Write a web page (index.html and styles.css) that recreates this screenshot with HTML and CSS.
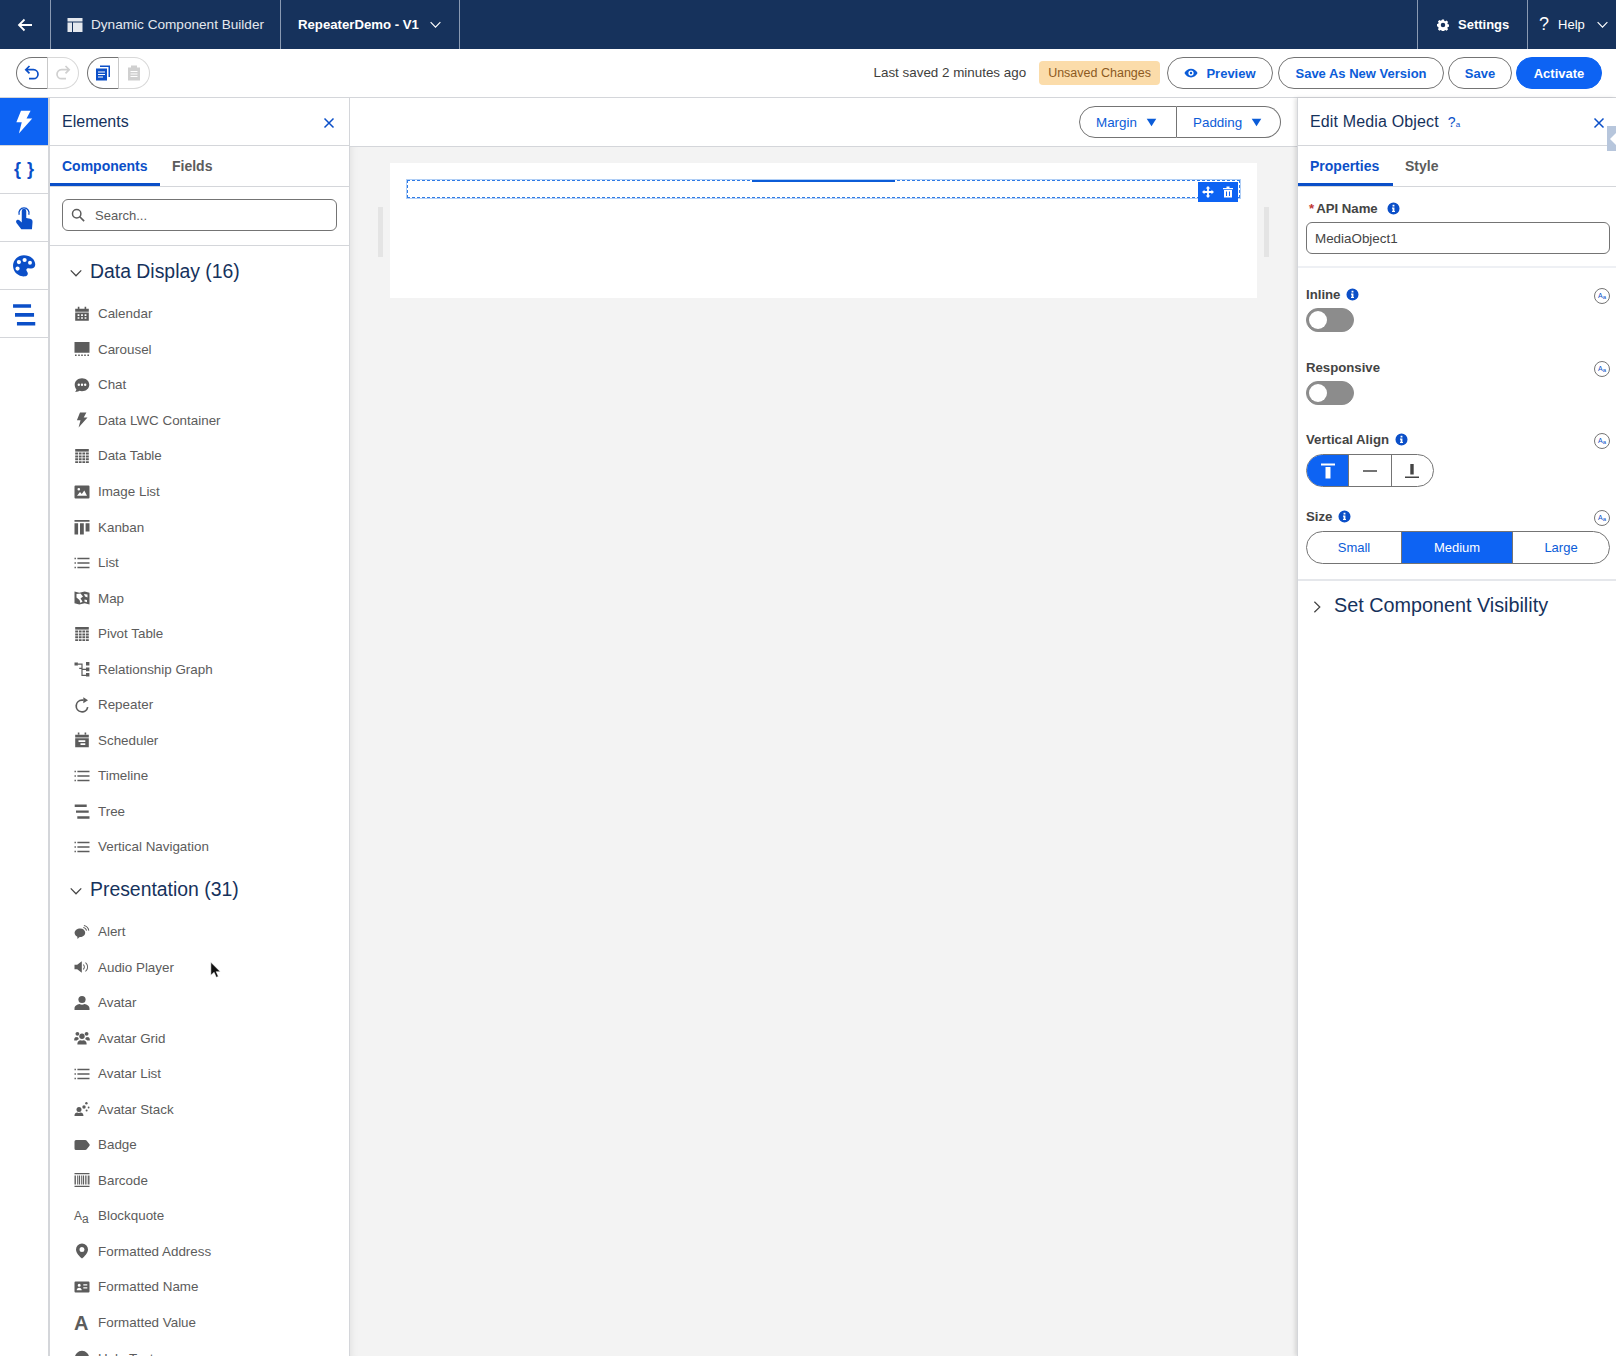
FILE: index.html
```html
<!DOCTYPE html>
<html lang="en">
<head>
    <meta charset="UTF-8">
    <title>Dynamic Component Builder</title>
    <link rel="stylesheet" href="styles.css">
</head>
<body>
    <!-- icon sprite -->
    <svg class="sprite" xmlns="http://www.w3.org/2000/svg">
        <symbol id="i-bolt" viewBox="0 0 16 16"><path d="M6 .5h6.4L9.7 5.600h3.800L4.600 15.600l1.900-7.400H2.900z"/></symbol>
        <symbol id="i-calendar" viewBox="0 0 16 16"><path d="M3.800.8h1.600v1.900H3.800zM10.600.8h1.600v1.900h-1.600zM1.200 2.800h13.600v2.900H1.200z"/><path fill-rule="evenodd" d="M1.200 6.500h13.600v8.300H1.200zM3.600 8.300v1.600h1.800V8.300zm3.500 0v1.600h1.800V8.300zm3.500 0v1.600h1.800V8.300zm-7 2.900v1.600h1.800v-1.600zm3.500 0v1.600h1.800v-1.600zm3.500 0v1.600h1.800v-1.600z"/></symbol>
        <symbol id="i-carousel" viewBox="0 0 16 16"><path d="M.5 1h15v10.800H.5zM1 13.400h1.600V15H1zM4.200 13.400h1.600V15H4.200zM7.200 13.400h1.600V15H7.200zM10.200 13.400h1.600V15h-1.600zM13.400 13.400H15V15h-1.600z"/></symbol>
        <symbol id="i-chat" viewBox="0 0 16 16"><path fill-rule="evenodd" d="M8 1.200c4.100 0 7.300 2.900 7.300 6.500s-3.200 6.500-7.300 6.500c-.9 0-1.800-.1-2.600-.4-1 .8-2.700 1.200-4.400 1 .8-.6 1.300-1.500 1.400-2.500C1.400 11.100.7 9.500.7 7.700.7 4.100 3.900 1.200 8 1.200zM4.800 6.500a1.200 1.200 0 100 2.400 1.200 1.200 0 000-2.400zm3.200 0a1.200 1.200 0 100 2.400 1.200 1.200 0 000-2.400zm3.200 0a1.200 1.200 0 100 2.400 1.200 1.200 0 000-2.400z"/></symbol>
        <symbol id="i-table" viewBox="0 0 16 16"><path d="M1.200 1h13.600v2.600H1.200z"/><path d="M1.200 4.500h3v2h-3zM5 4.500h2.600v2H5zM8.400 4.500H11v2H8.400zM11.800 4.500h3v2h-3zM1.200 7.400h3v2h-3zM5 7.400h2.600v2H5zM8.400 7.400H11v2H8.400zM11.800 7.400h3v2h-3zM1.200 10.300h3v2h-3zM5 10.300h2.600v2H5zM8.400 10.300H11v2H8.400zM11.800 10.300h3v2h-3zM1.200 13.200h3V15h-3zM5 13.200h2.600V15H5zM8.400 13.200H11V15H8.400zM11.800 13.200h3V15h-3z"/></symbol>
        <symbol id="i-image" viewBox="0 0 16 16"><path fill-rule="evenodd" d="M1.500 1.500h13a1 1 0 011 1v11a1 1 0 01-1 1h-13a1 1 0 01-1-1v-11a1 1 0 011-1zM3 11.800h10L10.300 6.500 7.800 10 6 8zM4.800 4a1.300 1.300 0 100 2.600 1.300 1.300 0 000-2.600z"/></symbol>
        <symbol id="i-kanban" viewBox="0 0 16 16"><path d="M.5 1h15v1.800H.5zM.5 4.200h3.600v11.300H.5zM6 4.200h3.800v11.300H6zM11.600 4.200h3.900v8.300h-3.900z"/></symbol>
        <symbol id="i-list" viewBox="0 0 16 16"><path d="M.5 2.800h1.400v1.400H.5zM.5 7.300h1.400v1.400H.5zM.5 11.800h1.400v1.400H.5zM3.400 2.800h12.100v1.400H3.400zM3.400 7.300h12.100v1.400H3.400zM3.400 11.800h12.100v1.400H3.400z"/></symbol>
        <symbol id="i-map" viewBox="0 0 16 16"><path fill-rule="evenodd" d="M.5 1.500l4.800 1.300 5.400-1.300 4.800 1.300v11.700l-4.800-1.300-5.400 1.300-4.800-1.300zM2.500 4v3.500L5.500 10l1 3 2-1.500-2-3 2.500-2-2.500-3zM10 4l1 2.500 2.500 1V4.500zM10.500 9.500v2l2.500.7V10z"/></symbol>
        <symbol id="i-graph" viewBox="0 0 16 16"><path d="M.5 1.500h3.400v3H.5zM12 1h3.400v3.600H12zM12 6.600h3.400v3.600H12zM12 12h3.400v3.600H12z"/><path d="M3.900 2.500h4.700v11.300H12v1.200H7.400V8H5.200V6.800h2.200V3.700H3.900zM8.600 7.800H12V9H8.600z"/></symbol>
        <symbol id="i-repeat" viewBox="0 0 16 16"><path d="M9.500 3.200H8a5.800 5.800 0 105.700 6.900" fill="none" stroke="#5c5c5c" stroke-width="1.700"/><path d="M9.300.3l4.700 3-4.700 3z"/></symbol>
        <symbol id="i-scheduler" viewBox="0 0 16 16"><path d="M3.800.6h1.600v1.900H3.800zM10.600.6h1.600v1.900h-1.600zM1.200 2.800h13.600v2.700H1.200z"/><path fill-rule="evenodd" d="M1.200 6.300h13.600v8.900H1.200zM4.500 8.200v1.700h6.800V8.200zm2 3.100v1.700h4.800v-1.700z"/></symbol>
        <symbol id="i-tree" viewBox="0 0 16 16"><path d="M.7 1.500h12v2.400H.7zM2 7.400h12.700v2.400H2zM3.300 13.300h12.200v2.400H3.300z"/></symbol>
        <symbol id="i-alert" viewBox="0 0 16 16"><path d="M6.200 4.500c3 0 5 2 5 4.300 0 2.400-2.400 4.300-5 4.300l-1 .1-1.600 1.800-.4-2.500C1.600 12 .6 10.500.6 8.800c0-2.300 2.500-4.300 5.600-4.300z"/><path d="M10 .9c2.900.5 5 2.700 5.300 5.700l-1 .1C14 4.200 12.300 2.300 9.800 1.900zM9.400 3c1.900.3 3.300 1.600 3.600 3.500l-1 .2c-.3-1.400-1.200-2.400-2.800-2.700z"/></symbol>
        <symbol id="i-audio" viewBox="0 0 16 16"><path d="M.5 5.800h2.700L7.800 2.200v11.600L3.200 10.200H.5z"/><path d="M9.500 5.300c.9.700 1.300 1.600 1.300 2.700s-.4 2-1.300 2.700l-.6-.8c.6-.5 1-1.100 1-1.900s-.4-1.400-1-1.900zM11.700 3.300c1.500 1.100 2.300 2.800 2.300 4.700s-.8 3.600-2.300 4.700l-.6-.8c1.200-.9 2-2.300 2-3.900s-.8-3-2-3.900z"/></symbol>
        <symbol id="i-avatar" viewBox="0 0 16 16"><circle cx="8" cy="4.500" r="3.600"/><path d="M.5 15v-1.400C.5 10.800 3 9.400 5.500 9c1.500.9 3.500.9 5 0 2.500.4 5 1.800 5 4.600V15z"/></symbol>
        <symbol id="i-group" viewBox="0 0 16 16"><circle cx="8" cy="6.200" r="2.700"/><path d="M3.400 14.500v-1c0-2 1.600-3 3.100-3.300 1 .5 2 .5 3 0 1.500.3 3.100 1.300 3.100 3.300v1z"/><circle cx="3.400" cy="3.800" r="1.900"/><circle cx="12.600" cy="3.800" r="1.900"/><path d="M.2 10.600V9.400c0-1.300 1-2.200 2-2.400.6.300 1.200.4 1.800.2.200.7.500 1.300 1 1.800-1 .4-1.700.9-2.200 1.600zM15.800 10.600V9.400c0-1.300-1-2.200-2-2.400-.6.300-1.200.4-1.800.2-.2.700-.5 1.300-1 1.800 1 .4 1.700.9 2.200 1.600z"/></symbol>
        <symbol id="i-stack" viewBox="0 0 16 16"><circle cx="5" cy="8.500" r="2.500"/><path d="M.5 15v-.8c0-1.600 1.300-2.400 2.700-2.700.9.500 2.300.5 3.300 0 1.600.3 2.900 1.100 2.900 2.700v.8z"/><circle cx="10" cy="6" r="1.700"/><circle cx="12.400" cy="2.200" r="1.200"/><circle cx="14.600" cy="6.500" r=".9"/><circle cx="12.600" cy="9.400" r="1"/></symbol>
        <symbol id="i-badge" viewBox="0 0 16 16"><path d="M2 3h9.300c.5 0 .9.200 1.200.5l3 3.800c.3.400.3 1 0 1.400l-3 3.800c-.3.300-.7.500-1.200.5H2a1.500 1.500 0 01-1.500-1.500v-7A1.500 1.500 0 012 3z"/></symbol>
        <symbol id="i-barcode" viewBox="0 0 16 16"><path d="M.5 1h15v1.300H.5zM.5 13.700h15V15H.5zM.5 3.500h1.400v9H.5zM3 3.500h.8v9H3zM4.700 3.500h1.400v9H4.700zM7 3.500h.8v9H7zM8.700 3.500h1.400v9H8.700zM11 3.500h.8v9H11zM12.500 3.500h.8v9h-.8zM14.100 3.500h1.400v9h-1.400z"/></symbol>
        <symbol id="i-pin" viewBox="0 0 16 16"><path fill-rule="evenodd" d="M8 .5a6 6 0 016 6c0 3.600-3.800 7.300-6 9-2.200-1.700-6-5.400-6-9a6 6 0 016-6zm0 3.600a2.500 2.500 0 100 5 2.500 2.500 0 000-5z"/></symbol>
        <symbol id="i-card" viewBox="0 0 16 16"><path fill-rule="evenodd" d="M1.500 2.500h13a1 1 0 011 1v9a1 1 0 01-1 1h-13a1 1 0 01-1-1v-9a1 1 0 011-1zM5.200 4.800a1.500 1.500 0 100 3 1.500 1.500 0 000-3zM2.700 11.200h5c0-1.600-1-2.500-2.500-2.500s-2.500.9-2.500 2.500zM9.300 5.300v1.300h4V5.300zm0 3v1.300h4V8.300z"/></symbol>
        <symbol id="i-help" viewBox="0 0 16 16"><circle cx="8" cy="8" r="7.200"/></symbol>
        <symbol id="i-info" viewBox="0 0 14 14"><path fill-rule="evenodd" d="M7 .5a6.500 6.500 0 110 13 6.500 6.500 0 010-13zM6 3v1.800h2V3zm-.6 3v1.200H6v2.400h-.6v1.200h3.200V9.600H8V6z"/></symbol>
        <symbol id="i-chev" viewBox="0 0 16 16"><path d="M2 5l6 6.200L14 5" fill="none" stroke="currentColor" stroke-width="1.400"/></symbol>
        <symbol id="i-caret" viewBox="0 0 12 12"><path d="M.8 2h10.400L6 10z"/></symbol>
        <symbol id="i-close" viewBox="0 0 12 12"><path d="M1.500 1.500l9 9M10.500 1.500l-9 9" fill="none" stroke="currentColor" stroke-width="1.500"/></symbol>
    </svg>

    <header class="topbar">
        <a class="topbar-item back">
            <svg class="icon-18" viewBox="0 0 18 18"><path d="M16 9H3M8.500 3.500L3 9l5.500 5.500" fill="none" stroke="currentColor" stroke-width="1.800"/></svg>
        </a>
        <div class="topbar-item app-name">
            <svg class="icon-16" viewBox="0 0 16 16"><path d="M.5 1h15v3.500H.5zM.5 5.500h4.500v9.500H.5zM6 5.500h9.500v9.500H6z" fill="currentColor"/></svg>
            <span>Dynamic Component Builder</span>
        </div>
        <div class="topbar-item version">
            <span>RepeaterDemo - V1</span>
            <svg class="icon-13"><use href="#i-chev"/></svg>
        </div>
        <div class="topbar-space"></div>
        <div class="topbar-item settings">
            <svg class="icon-12" viewBox="0 0 16 16"><path fill="currentColor" fill-rule="evenodd" d="M6.600.6h2.800l.4 1.900 1.300.6 1.700-1 2 2-1 1.700.6 1.300 1.900.4v2.800l-1.900.4-.6 1.300 1 1.700-2 2-1.700-1-1.300.6-.4 1.900H6.600l-.4-1.900-1.300-.6-1.700 1-2-2 1-1.700-.6-1.300L-.3 9.400V6.600l1.900-.4.600-1.300-1-1.700 2-2 1.700 1 1.300-.6zM8 5a3 3 0 100 6 3 3 0 000-6z"/></svg>
            <span>Settings</span>
        </div>
        <div class="topbar-item help">
            <span class="help-mark">?</span>
            <span>Help</span>
            <svg class="icon-13"><use href="#i-chev"/></svg>
        </div>
    </header>

    <div class="toolbar">
        <div class="btn-pair">
            <button class="pair-btn on">
                <svg class="icon-18" viewBox="0 0 18 18"><path d="M6.500 2L2.800 5.700l3.700 3.700M3 5.700h7.500a4.500 4.500 0 010 9H6" fill="none" stroke="currentColor" stroke-width="1.700"/></svg>
            </button>
            <button class="pair-btn off">
                <svg class="icon-18" viewBox="0 0 18 18"><path d="M11.500 2l3.700 3.700-3.700 3.700M15 5.700H7.500a4.500 4.500 0 000 9H12" fill="none" stroke="currentColor" stroke-width="1.700"/></svg>
            </button>
        </div>
        <div class="btn-pair">
            <button class="pair-btn on">
                <svg class="icon-16" viewBox="0 0 16 16"><path fill="currentColor" d="M5 .5h10v11.500h-1.500V2H5z"/><path fill="currentColor" fill-rule="evenodd" d="M1 3.500h11V15.500H1zM3 6.500v1h7v-1zm0 2.500v1h7V9zm0 2.500v1h5v-1z"/></svg>
            </button>
            <button class="pair-btn off">
                <svg class="icon-16" viewBox="0 0 16 16"><path fill="currentColor" fill-rule="evenodd" d="M5 .5h6v2h3v13H2v-13h3zM4.500 6v1h7V6zm0 2.500v1h7v-1zm0 2.500v1h7v-1z"/></svg>
            </button>
        </div>
        <div class="toolbar-space"></div>
        <span class="saved">Last saved 2 minutes ago</span>
        <span class="unsaved">Unsaved Changes</span>
        <button class="btn btn-preview">
            <svg class="icon-14" viewBox="0 0 16 16"><path fill="currentColor" fill-rule="evenodd" d="M8 3c3.300 0 6 2.100 7.500 5-1.500 2.900-4.200 5-7.500 5S2 10.900.5 8C2 5.100 4.700 3 8 3zm0 2a3 3 0 100 6 3 3 0 000-6zm0 1.600a1.400 1.400 0 110 2.800 1.400 1.400 0 010-2.800z"/></svg>
            Preview
        </button>
        <button class="btn btn-version">Save As New Version</button>
        <button class="btn btn-save">Save</button>
        <button class="btn btn-activate">Activate</button>
    </div>

    <div class="workspace">
        <nav class="rail">
            <div class="rail-item active"><svg class="icon-24"><use href="#i-bolt"/></svg></div>
            <div class="rail-item"><span class="braces">{ }</span></div>
            <div class="rail-item">
                <svg class="icon-24" viewBox="0 0 16 16"><path fill="currentColor" d="M6.500 6V3.300a1.500 1.500 0 013 0V8l2.600.5c1 .2 1.700 1.100 1.600 2.100L13.300 15.500H6.200L3 11.300c-.5-.7-.3-1.500.3-1.900.6-.4 1.300-.3 1.800.2l1.400 1.400z"/><path fill="none" stroke="currentColor" stroke-width=".9" d="M4.800 5.800a3.400 3.400 0 116.400 0"/></svg>
            </div>
            <div class="rail-item">
                <svg class="icon-24" viewBox="0 0 16 16"><path fill="currentColor" fill-rule="evenodd" d="M8 .8c4.200 0 7.500 2.800 7.500 6.200 0 1.800-1.500 3-3.300 2.700l-1.400-.2c-1-.1-1.600 1-1 1.800l.5.800c.7 1.200-.1 2.800-1.700 2.800A7.100 7.100 0 01.7 8 7.200 7.200 0 018 .8zM4.600 4a1.400 1.400 0 100 2.800 1.400 1.400 0 000-2.800zM8.400 2.600a1.400 1.400 0 100 2.800 1.400 1.400 0 000-2.800zM12 4.500a1.300 1.300 0 100 2.600 1.300 1.300 0 000-2.600zM3.700 8.300a1.400 1.400 0 100 2.800 1.400 1.400 0 000-2.800z"/></svg>
            </div>
            <div class="rail-item"><svg class="icon-24"><use href="#i-tree"/></svg></div>
        </nav>

        <aside class="elements">
            <div class="panel-head">
                <h2>Elements</h2>
                <svg class="panel-close"><use href="#i-close"/></svg>
            </div>
            <div class="tabs">
                <div class="tab active tab-components">Components</div>
                <div class="tab">Fields</div>
            </div>
            <div class="search-wrap">
                <div class="search">
                    <svg class="icon-14" viewBox="0 0 16 16"><circle cx="6.500" cy="6.500" r="4.800" fill="none" stroke="currentColor" stroke-width="1.700"/><path d="M10 10l5 5" stroke="currentColor" stroke-width="1.900"/></svg>
                    <span>Search...</span>
                </div>
            </div>
            <div class="element-list">
                <div class="group-title"><svg class="icon-14"><use href="#i-chev"/></svg>Data Display (16)</div>
                <ul>
                    <li><svg><use href="#i-calendar"/></svg>Calendar</li>
                    <li><svg><use href="#i-carousel"/></svg>Carousel</li>
                    <li><svg><use href="#i-chat"/></svg>Chat</li>
                    <li><svg><use href="#i-bolt"/></svg>Data LWC Container</li>
                    <li><svg><use href="#i-table"/></svg>Data Table</li>
                    <li><svg><use href="#i-image"/></svg>Image List</li>
                    <li><svg><use href="#i-kanban"/></svg>Kanban</li>
                    <li><svg><use href="#i-list"/></svg>List</li>
                    <li><svg><use href="#i-map"/></svg>Map</li>
                    <li><svg><use href="#i-table"/></svg>Pivot Table</li>
                    <li><svg><use href="#i-graph"/></svg>Relationship Graph</li>
                    <li><svg><use href="#i-repeat"/></svg>Repeater</li>
                    <li><svg><use href="#i-scheduler"/></svg>Scheduler</li>
                    <li><svg><use href="#i-list"/></svg>Timeline</li>
                    <li><svg><use href="#i-tree"/></svg>Tree</li>
                    <li><svg><use href="#i-list"/></svg>Vertical Navigation</li>
                </ul>
                <div class="group-title"><svg class="icon-14"><use href="#i-chev"/></svg>Presentation (31)</div>
                <ul>
                    <li><svg><use href="#i-alert"/></svg>Alert</li>
                    <li><svg><use href="#i-audio"/></svg>Audio Player</li>
                    <li><svg><use href="#i-avatar"/></svg>Avatar</li>
                    <li><svg><use href="#i-group"/></svg>Avatar Grid</li>
                    <li><svg><use href="#i-list"/></svg>Avatar List</li>
                    <li><svg><use href="#i-stack"/></svg>Avatar Stack</li>
                    <li><svg><use href="#i-badge"/></svg>Badge</li>
                    <li><svg><use href="#i-barcode"/></svg>Barcode</li>
                    <li><span class="glyph">A<small>a</small></span>Blockquote</li>
                    <li><svg><use href="#i-pin"/></svg>Formatted Address</li>
                    <li><svg><use href="#i-card"/></svg>Formatted Name</li>
                    <li><span class="glyph glyph-big">A</span>Formatted Value</li>
                    <li><svg><use href="#i-help"/></svg>Help Text</li>
                </ul>
            </div>
        </aside>

        <main class="stage">
            <div class="stage-head">
                <div class="spacing-btns">
                    <button>Margin<svg class="icon-11"><use href="#i-caret"/></svg></button>
                    <button>Padding<svg class="icon-11"><use href="#i-caret"/></svg></button>
                </div>
            </div>
            <div class="canvas">
                <div class="handle"></div>
                <div class="canvas-card">
                    <div class="selected">
                        <div class="selected-bar"></div>
                        <div class="selected-tools">
                            <svg class="icon-12" viewBox="0 0 12 12"><path fill="currentColor" d="M6 0l2.300 2.500H6.900v2.600h2.600V3.700L12 6 9.500 8.300V6.900H6.900v2.600h1.400L6 12 3.700 9.500h1.400V6.900H2.500v1.400L0 6l2.500-2.300v1.400h2.600V2.500H3.700z"/></svg>
                            <svg class="icon-12" viewBox="0 0 12 12"><path fill="currentColor" fill-rule="evenodd" d="M4.500.5h3V2H11v1.300H1V2h3.500zM2 4h8v7.500H2zM4 5.500v4.500h1V5.500zm3 0v4.500h1V5.500z"/></svg>
                        </div>
                    </div>
                </div>
                <div class="handle"></div>
            </div>
        </main>

        <aside class="props">
            <div class="panel-head props-head">
                <h2>Edit Media Object</h2>
                <span class="title-help">?<small>a</small></span>
                <svg class="panel-close"><use href="#i-close"/></svg>
                <div class="edge-tab"></div>
            </div>
            <div class="tabs props-tabs">
                <div class="tab active tab-properties">Properties</div>
                <div class="tab">Style</div>
            </div>

            <div class="prop-section api-section">
                <div class="field-label"><span class="req">*</span>API Name<svg class="info info-api"><use href="#i-info"/></svg></div>
                <div class="text-input">MediaObject1</div>
            </div>

            <div class="prop-section attrs">
                <div class="field field-inline">
                    <div class="field-row">
                        <div class="field-label">Inline<svg class="info"><use href="#i-info"/></svg></div>
                        <span class="dyn">A<small>a</small></span>
                    </div>
                    <div class="toggle"><span></span></div>
                </div>
                <div class="field field-inline field-short">
                    <div class="field-row">
                        <div class="field-label">Responsive</div>
                        <span class="dyn">A<small>a</small></span>
                    </div>
                    <div class="toggle"><span></span></div>
                </div>
                <div class="field field-align">
                    <div class="field-row">
                        <div class="field-label">Vertical Align<svg class="info"><use href="#i-info"/></svg></div>
                        <span class="dyn">A<small>a</small></span>
                    </div>
                    <div class="segments segments-align">
                        <div class="segment active">
                            <svg class="icon-18" viewBox="0 0 18 18"><path fill="currentColor" d="M2 1.500h14v2H2zM6.500 5h5v11.500h-5z"/></svg>
                        </div>
                        <div class="segment">
                            <svg class="icon-18" viewBox="0 0 18 18"><path fill="currentColor" d="M2 8.300h14v1.400H2z"/></svg>
                        </div>
                        <div class="segment">
                            <svg class="icon-18" viewBox="0 0 18 18"><path fill="currentColor" d="M7.300 2h3.400v10.500H7.300zM2 14.500h14v1.500H2z"/></svg>
                        </div>
                    </div>
                </div>
                <div class="field">
                    <div class="field-row">
                        <div class="field-label">Size<svg class="info"><use href="#i-info"/></svg></div>
                        <span class="dyn">A<small>a</small></span>
                    </div>
                    <div class="segments segments-size">
                        <div class="segment">Small</div>
                        <div class="segment active">Medium</div>
                        <div class="segment">Large</div>
                    </div>
                </div>
            </div>

            <div class="visibility">
                <svg class="icon-14 chev-right"><use href="#i-chev"/></svg>
                Set Component Visibility
            </div>
        </aside>
    </div>

    <!-- mouse pointer caught in the screenshot -->
    <svg class="cursor" viewBox="0 0 14 20"><path d="M1 1v15l3.800-3.300 2.500 5.800 2.400-1-2.500-5.600H12z" fill="#111" stroke="#fff" stroke-width=".6"/></svg>
</body>
</html>
```

FILE: styles.css
```css
* {
    box-sizing: border-box;
}
html, body {
    margin: 0;
    padding: 0;
    height: 100%;
    overflow: hidden;
}
body {
    width: 1616px;
    height: 1356px;
    position: relative;
    display: flex;
    flex-direction: column;
    font-family: "Liberation Sans", Arial, sans-serif;
    font-size: 14px;
    color: #181818;
    background-color: #fff;
}
button {
    font-family: inherit;
    cursor: pointer;
}
.sprite {
    display: none;
}
.icon-11 { width: 11px; height: 11px; fill: currentColor; }
.icon-12 { width: 12px; height: 12px; }
.icon-13 { width: 13px; height: 13px; }
.icon-14 { width: 14px; height: 14px; }
.icon-16 { width: 16px; height: 16px; }
.icon-18 { width: 18px; height: 18px; }
.icon-24 { width: 24px; height: 24px; fill: currentColor; }

/* top bar */
.topbar {
    display: flex;
    align-items: stretch;
    height: 49px;
    flex-shrink: 0;
    background-color: #16325c;
    color: #fff;
}
.topbar-item {
    display: flex;
    align-items: center;
    border-right: 1px solid #8a9ab2;
}
.back {
    width: 51px;
    justify-content: center;
}
.app-name {
    width: 230px;
    padding-left: 16px;
    gap: 8px;
    color: #e4e8ee;
    font-size: 13.600px;
}
.version {
    width: 179px;
    padding-left: 17px;
    gap: 10px;
    font-weight: bold;
    font-size: 13.200px;
}
.topbar-space {
    flex: 1;
}
.settings {
    width: 111px;
    border-left: 1px solid #8a9ab2;
    padding-left: 19px;
    gap: 9px;
    font-weight: bold;
    font-size: 13px;
}
.help {
    width: 88px;
    border-right: 0;
    padding-left: 11px;
    gap: 9px;
    font-size: 13px;
}
.help-mark {
    font-size: 18px;
}
.help svg {
    margin-left: 2px;
}

/* toolbar */
.toolbar {
    display: flex;
    align-items: center;
    height: 49px;
    flex-shrink: 0;
    padding: 0 14px 0 16px;
    border-bottom: 1px solid #d4d6da;
}
.btn-pair {
    display: flex;
    margin-right: 8px;
}
.pair-btn {
    width: 32px;
    height: 32px;
    padding: 0;
    display: flex;
    align-items: center;
    justify-content: center;
    background-color: #fff;
}
.pair-btn.on {
    border: 1px solid #747474;
    border-right-color: #c9c9c9;
    border-radius: 16px 0 0 16px;
    color: #0b4fc8;
}
.pair-btn.off {
    width: 31px;
    border: 1px solid #d8d8d8;
    border-left: 0;
    border-radius: 0 16px 16px 0;
    color: #d0d0d0;
}
.toolbar-space {
    flex: 1;
}
.saved {
    font-size: 13.400px;
    color: #3e3e3c;
    margin: 0 13px 2px 0;
}
.unsaved {
    display: flex;
    align-items: center;
    height: 24px;
    padding: 0 9px;
    margin-right: 7px;
    border-radius: 4px;
    background-color: #fbdcaa;
    color: #8c5a1f;
    font-size: 12.500px;
}
.btn {
    display: flex;
    align-items: center;
    justify-content: center;
    height: 32px;
    margin-left: 5px;
    padding: 0;
    border: 1px solid #747474;
    border-radius: 16px;
    background-color: #fff;
    color: #0b5cd8;
    font-size: 13px;
    font-weight: bold;
}
.btn-preview {
    width: 106px;
    gap: 8px;
    margin-left: 0;
}
.btn-version {
    width: 166px;
}
.btn-save {
    width: 64px;
    margin-left: 4px;
}
.btn-activate {
    width: 86px;
    margin-left: 4px;
    border-color: #0d63f3;
    background-color: #0d63f3;
    color: #fff;
}

/* main area */
.workspace {
    flex: 1;
    display: flex;
    min-height: 0;
}
.rail {
    width: 50px;
    flex-shrink: 0;
    border-right: 2px solid #d4d6da;
}
.rail-item {
    display: flex;
    align-items: center;
    justify-content: center;
    height: 48px;
    border-bottom: 1px solid #d4d6da;
    color: #0b4fc8;
}
.rail-item.active {
    background-color: #0d63f3;
    color: #fff;
}
.braces {
    font-size: 18px;
    font-weight: bold;
    word-spacing: 1px;
}

/* elements panel */
.elements {
    width: 300px;
    flex-shrink: 0;
    display: flex;
    flex-direction: column;
    border-right: 1px solid #d4d6da;
}
.panel-head {
    position: relative;
    display: flex;
    align-items: center;
    height: 48px;
    flex-shrink: 0;
    padding: 0 12px;
    border-bottom: 1px solid #d4d6da;
}
.panel-head h2 {
    margin: 0;
    font-size: 16px;
    font-weight: normal;
    color: #16325c;
}
.panel-close {
    width: 12px;
    height: 12px;
    margin-left: auto;
    margin-right: 2px;
    margin-top: 3px;
    color: #0b4fc8;
}
.tabs {
    display: flex;
    height: 41px;
    flex-shrink: 0;
    border-bottom: 1px solid #d4d6da;
    font-size: 14px;
    font-weight: bold;
    color: #5c5c5c;
}
.tab {
    padding: 12px 12px 0;
}
.tab.active {
    color: #0b4fc8;
    border-bottom: 3px solid #0b4fc8;
}
.tab-components {
    width: 110px;
}
.search-wrap {
    height: 59px;
    flex-shrink: 0;
    padding: 12px 12px 0;
    border-bottom: 1px solid #d4d6da;
}
.search {
    display: flex;
    align-items: center;
    gap: 10px;
    height: 32px;
    padding: 0 8px;
    border: 1px solid #747474;
    border-radius: 6px;
    color: #5c5c5c;
    font-size: 13px;
}
.element-list {
    flex: 1;
    overflow: hidden;
    padding-top: 6px;
}
.group-title {
    display: flex;
    align-items: center;
    gap: 7px;
    height: 39px;
    padding-left: 19px;
    font-size: 19.400px;
    color: #16325c;
}
.group-title svg {
    color: #444;
    margin-top: 3px;
}
.element-list ul {
    list-style: none;
    margin: 0 0 5px;
    padding: 5px 0 0;
}
.element-list li {
    display: flex;
    align-items: center;
    gap: 8px;
    height: 35.560px;
    padding-left: 24px;
    font-size: 13.400px;
    color: #5c5c5c;
}
.element-list li svg {
    width: 16px;
    height: 16px;
    flex-shrink: 0;
    fill: #5c5c5c;
}
.glyph {
    width: 16px;
    flex-shrink: 0;
    font-size: 12px;
    line-height: 16px;
    white-space: nowrap;
}
.glyph small {
    font-size: 12px;
    position: relative;
    top: 3px;
}
.glyph-big {
    font-size: 20px;
    font-weight: bold;
}

/* stage */
.stage {
    flex: 1;
    min-width: 0;
    display: flex;
    flex-direction: column;
}
.stage-head {
    display: flex;
    align-items: center;
    justify-content: flex-end;
    height: 49px;
    flex-shrink: 0;
    padding-right: 16px;
    border-bottom: 1px solid #d4d6da;
}
.spacing-btns {
    display: flex;
}
.spacing-btns button {
    display: flex;
    align-items: center;
    gap: 9px;
    height: 32px;
    padding: 0;
    border: 1px solid #747474;
    background-color: #fff;
    color: #0b5cd8;
    font-size: 13.400px;
}
.spacing-btns button:first-child {
    width: 98px;
    padding-left: 16px;
    border-radius: 16px 0 0 16px;
}
.spacing-btns button:last-child {
    width: 104px;
    padding-left: 16px;
    border-left: 0;
    border-radius: 0 16px 16px 0;
}
.canvas {
    flex: 1;
    display: flex;
    align-items: flex-start;
    gap: 7px;
    padding: 16px 0 0 28px;
    background-color: #f3f3f3;
    box-shadow: inset 8px 0 8px -8px rgba(0, 0, 0, 0.1);
}
.handle {
    width: 5px;
    height: 50px;
    margin-top: 44px;
    background-color: #e4e4e4;
}
.canvas-card {
    width: 867px;
    height: 135px;
    padding: 17px 17px 0 17px;
    background-color: #fff;
}
.selected {
    position: relative;
    height: 18px;
    border: 1px dashed #2f7be6;
    box-shadow: 0 0 0 1px rgba(61, 134, 232, 0.4);
}
.selected-bar {
    position: absolute;
    top: -1px;
    left: 344px;
    width: 143px;
    height: 2px;
    background-color: #0b5cd8;
}
.selected-tools {
    position: absolute;
    top: 1px;
    right: 1px;
    display: flex;
    align-items: center;
    justify-content: center;
    gap: 8px;
    width: 40px;
    height: 20px;
    background-color: #0d63f3;
    color: #fff;
}

/* properties panel */
.props {
    width: 319px;
    flex-shrink: 0;
    display: flex;
    flex-direction: column;
    border-left: 1px solid #d4d6da;
    box-shadow: -2px 0 4px rgba(0, 0, 0, 0.12);
    background-color: #fff;
}
.props-head {
    gap: 9px;
    padding-right: 11px;
}
.props-head h2 {
    letter-spacing: 0.150px;
}
.props-head .panel-close {
    margin-right: 0;
}
.title-help {
    color: #0b4fc8;
    font-size: 14px;
}
.title-help small {
    font-size: 8px;
}
.edge-tab {
    position: absolute;
    right: 0;
    top: 28px;
    width: 9px;
    height: 25px;
    display: flex;
    align-items: center;
    justify-content: flex-end;
    background-color: #b7c6dc;
}
.edge-tab::before {
    content: "";
    border-right: 6px solid #fff;
    border-top: 6px solid transparent;
    border-bottom: 6px solid transparent;
}
.tab-properties {
    width: 95px;
}
.prop-section {
    padding: 0 6px 0 8px;
}
.api-section {
    height: 81px;
    padding-top: 13px;
    border-bottom: 2px solid #eef0f4;
}
.field-label {
    display: flex;
    align-items: center;
    height: 16px;
    font-size: 13.200px;
    font-weight: bold;
    color: #444;
}
.req {
    color: #c23934;
    margin: 0 2px 0 3px;
}
.info {
    width: 13px;
    height: 13px;
    margin-left: 6px;
    fill: #0b4fc8;
}
.info-api {
    margin-left: 9px;
}
.text-input {
    display: flex;
    align-items: center;
    height: 32px;
    margin-top: 6px;
    padding-left: 8px;
    border: 1px solid #747474;
    border-radius: 6px;
    font-size: 13.400px;
    color: #444;
}
.attrs {
    height: 313px;
    padding-top: 17px;
    border-bottom: 2px solid #e5e7eb;
}
.field-row {
    display: flex;
    align-items: center;
    justify-content: space-between;
    height: 18px;
}
.field-inline {
    height: 73px;
}
.field-short {
    height: 72px;
}
.field-align {
    height: 77px;
}
.dyn {
    display: flex;
    align-items: center;
    justify-content: center;
    width: 16px;
    height: 16px;
    border: 1px solid #747474;
    border-radius: 50%;
    color: #0b4fc8;
    font-size: 7px;
    margin-top: 3px;
}
.dyn small {
    font-size: 6px;
    margin-top: 2px;
}
.toggle {
    width: 48px;
    height: 24px;
    margin-top: 5px;
    padding: 2px;
    border-radius: 12px;
    border: 1px solid #8c8c8c;
    background-color: #8c8c8c;
}
.toggle span {
    display: block;
    width: 18px;
    height: 18px;
    border-radius: 50%;
    background-color: #fff;
}
.segments {
    display: flex;
    overflow: hidden;
    border: 1px solid #747474;
    margin-top: 6px;
    color: #0b5cd8;
    font-size: 13px;
}
.segment {
    display: flex;
    align-items: center;
    justify-content: center;
    border-right: 1px solid #747474;
}
.segment:last-child {
    border-right: 0;
}
.segment.active {
    background-color: #0d63f3;
    color: #fff;
}
.segments-align {
    width: 128px;
    height: 33px;
    border-radius: 17px;
    color: #444;
}
.segments-align .segment {
    flex: 1;
}
.segments-size {
    height: 33px;
    border-radius: 17px;
}
.segments-size .segment:nth-child(1) {
    width: 95px;
}
.segments-size .segment:nth-child(2) {
    width: 111px;
}
.segments-size .segment:nth-child(3) {
    flex: 1;
}
.visibility {
    display: flex;
    align-items: center;
    gap: 10px;
    height: 48px;
    padding-left: 12px;
    font-size: 19.800px;
    color: #16325c;
}
.chev-right {
    transform: rotate(-90deg);
    color: #444;
    margin-top: 3px;
}

/* pointer */
.cursor {
    position: absolute;
    left: 210px;
    top: 961px;
    width: 12px;
    height: 18px;
}
```
